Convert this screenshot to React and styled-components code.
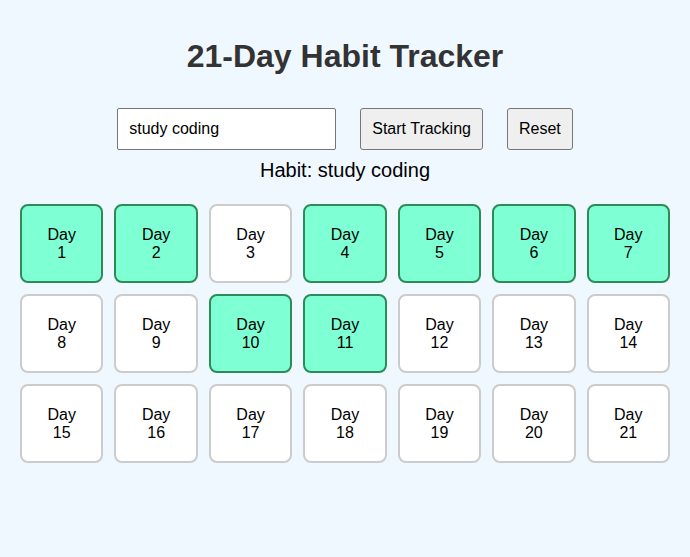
import React, { useState } from "react";
import styled, { createGlobalStyle } from "styled-components";

const Global = createGlobalStyle`
  html, body { margin: 0; padding: 0; background: #f0f8ff; }
  body { font-family: "Liberation Sans", Arial, sans-serif; min-height: 557px; }
`;

const Page = styled.div`
  padding: 20px;
  display: flex;
  flex-direction: column;
  align-items: center;
`;

const Title = styled.h1`
  margin: 18px 0 0;
  font-size: 32px;
  font-weight: bold;
  color: #333;
  line-height: 37px;
`;

const Controls = styled.div`
  margin-top: 33px;
  display: flex;
  gap: 24px;
  align-items: center;
`;

const Input = styled.input`
  box-sizing: border-box;
  width: 219px;
  height: 42px;
  padding: 0 11px;
  font-size: 16px;
  font-family: inherit;
  border: 1px solid #767676;
  border-radius: 2px;
  background: #fff;
  color: #000;
  outline: none;
`;

const Button = styled.button`
  box-sizing: border-box;
  height: 42px;
  padding: 0 11px;
  font-size: 16px;
  font-family: inherit;
  border: 1px solid #767676;
  border-radius: 3px;
  background: #efefef;
  color: #000;
`;

const HabitLabel = styled.div`
  margin-top: 9px;
  font-size: 20px;
  line-height: 23px;
  color: #000;
`;

const Grid = styled.div`
  align-self: stretch;
  margin-top: 22px;
  display: grid;
  grid-template-columns: repeat(7, 1fr);
  gap: 11px;
`;

const Cell = styled.div`
  box-sizing: border-box;
  height: 79px;
  border-radius: 8px;
  border: 2px solid ${(p) => (p.$done ? "#2e8b57" : "#ccc")};
  background: ${(p) => (p.$done ? "#7fffd4" : "#fff")};
  display: flex;
  flex-direction: column;
  align-items: center;
  justify-content: center;
  font-size: 16px;
  line-height: 18px;
  color: #000;
  cursor: pointer;
`;

const initialDone = [1, 2, 4, 5, 6, 7, 10, 11];

export default function App() {
  const [text, setText] = useState("study coding");
  const [habit, setHabit] = useState("study coding");
  const [done, setDone] = useState(new Set(initialDone));

  const toggle = (d) => {
    const n = new Set(done);
    if (n.has(d)) n.delete(d);
    else n.add(d);
    setDone(n);
  };

  return (
    <>
      <Global />
      <Page>
        <Title>21-Day Habit Tracker</Title>
        <Controls>
          <Input value={text} onChange={(e) => setText(e.target.value)} />
          <Button onClick={() => setHabit(text)}>Start Tracking</Button>
          <Button
            onClick={() => {
              setDone(new Set());
              setHabit("");
              setText("");
            }}
          >
            Reset
          </Button>
        </Controls>
        <HabitLabel>Habit: {habit}</HabitLabel>
        <Grid>
          {Array.from({ length: 21 }, (_, i) => i + 1).map((d) => (
            <Cell key={d} $done={done.has(d)} onClick={() => toggle(d)}>
              <span>Day</span>
              <span>{d}</span>
            </Cell>
          ))}
        </Grid>
      </Page>
    </>
  );
}
